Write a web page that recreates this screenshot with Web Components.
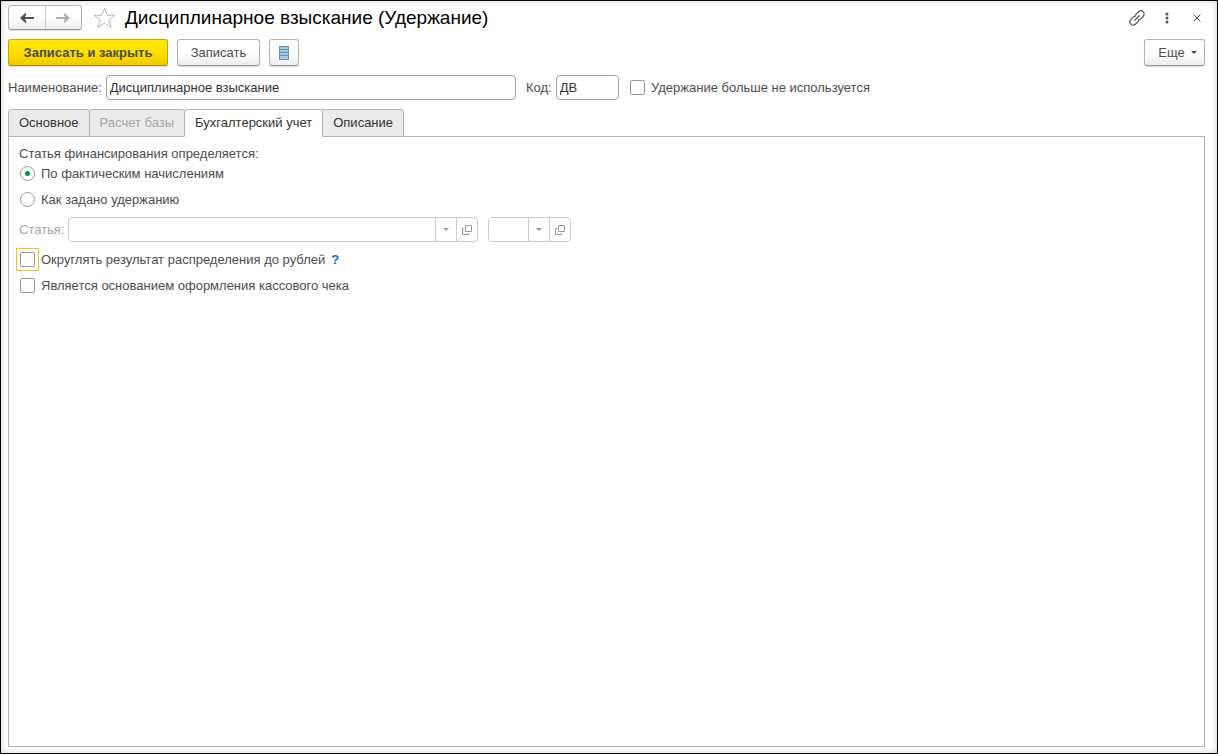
<!DOCTYPE html>
<html lang="ru">
<head>
<meta charset="utf-8">
<meta name="viewport" content="width=device-width, initial-scale=1">
<title>Дисциплинарное взыскание (Удержание)</title>
<style>
  body { margin: 0; font: 13px/16px "Liberation Sans", Arial, sans-serif; color: #4d4d4d; background: #fff; }
</style>
</head>
<body>
<deduction-form></deduction-form>
<script>
const base = `
  *, *::before, *::after { box-sizing: border-box; }
  button, input { font: inherit; color: inherit; margin: 0; }
  svg { display: block; }
`;

function define(name, css, html, setup) {
  const template = document.createElement('template');
  template.innerHTML = `<style>${base}${css}</style>${html}`;
  customElements.define(name, class extends HTMLElement {
    constructor() {
      super();
      this.attachShadow({ mode: 'open' }).append(template.content.cloneNode(true));
    }
    connectedCallback() {
      if (setup) setup(this, this.shadowRoot);
    }
  });
}

/* Push button; variant="primary" is the yellow default command */
define('ui-button', `
  :host { display: block; flex: none; }
  button { display: flex; align-items: center; justify-content: center; gap: 6px; width: 100%; height: 27px; padding: 0 12px;
    border: 1px solid #b3b3b3; border-bottom-color: #999; border-radius: 3px; white-space: nowrap;
    background: linear-gradient(#fff 50%, #ececec); box-shadow: 0 1px 1px #0002; }
  :host([variant=primary]) button { font-weight: bold; border-color: #c9a800; border-bottom-color: #a68a00;
    background: linear-gradient(#ffe70d, #ffdf00 50%, #ebca00); }
  :host([variant=icon]) button { width: 30px; padding: 0; }
  :host([variant=menu]) button { width: 61px; padding: 0 0 0 6px; }
`, `<button type="button"><slot></slot></button>`, (host, root) => {
  if (host.title) root.querySelector('button').setAttribute('aria-label', host.title);
});

/* Labelled text box */
define('ui-field', `
  :host { display: flex; align-items: center; gap: 4px; }
  label { white-space: nowrap; }
  input { flex: 1; min-width: 0; width: 100%; height: 25px; padding: 0 3px; border: 1px solid #a0a0a0; border-radius: 4px;
    background: #fff; color: #333; outline: none; }
`, `<label for="box"></label><input id="box" type="text">`, (host, root) => {
  root.querySelector('label').textContent = host.getAttribute('label');
  root.querySelector('input').value = host.getAttribute('value') || '';
});

/* Tick box or radio button with its caption */
define('ui-choice', `
  :host { display: flex; align-items: center; height: 15px; }
  label { display: flex; align-items: center; gap: 6px; white-space: nowrap; }
  input { appearance: none; position: relative; flex: none; width: 15px; height: 15px; border: 1px solid #999; border-radius: 2px; background: #fff; }
  input[type=radio] { border-radius: 50%; }
  input[type=radio]:checked { background: radial-gradient(circle, #009646 2px, #fff 3px); }
  input[type=checkbox]:checked { background: #009646; }
  :host([active]) input::before { content: ""; position: absolute; inset: -5px; border: 1px solid #f7c61b; }
`, `<label><input><slot></slot></label>`, (host, root) => {
  const input = root.querySelector('input');
  input.type = host.getAttribute('type') || 'checkbox';
  input.checked = host.hasAttribute('checked');
  input.addEventListener('change', () => host.dispatchEvent(new CustomEvent('pick', { bubbles: true })));
});

/* Disabled reference box with list and open buttons */
define('ui-picker', `
  :host { display: flex; align-items: center; gap: 3px; color: #a6a6a6; }
  .box { display: flex; flex: 1; min-width: 0; height: 25px; border: 1px solid #ccc; border-radius: 4px; background: #fff; overflow: hidden; }
  input { flex: 1; min-width: 0; width: 100%; border: 0; background: none; padding: 0 3px; }
  button { flex: none; display: grid; place-items: center; width: 21px; padding: 0; border: 0; border-left: 1px solid #ccc; background: none; }
  label:empty { display: none; }
`, `<label for="value"></label>
  <div class="box">
    <input id="value" type="text" disabled>
    <button type="button" disabled aria-label="Выбрать из списка"><svg width="6" height="3"><path d="M0 0H6L3 3Z" fill="#999"/></svg></button>
    <button type="button" disabled aria-label="Открыть"><svg width="10" height="10" fill="none" stroke="#999"><path d="M3.5.5H9.5V6.5H3.5ZM2 3.5H.5V9.5H6.5V8"/></svg></button>
  </div>`, (host, root) => {
  root.querySelector('label').textContent = host.getAttribute('label') || '';
  if (!host.hasAttribute('label')) root.querySelector('input').setAttribute('aria-label', 'Код статьи');
});

/* Window header: history buttons, favourite star, caption, window tools */
define('window-header', `
  :host { display: flex; align-items: center; height: 25px; }
  .history { display: flex; flex: none; width: 74px; height: 25px; border: 1px solid #b3b3b3; border-bottom-color: #999; border-radius: 3px;
    background: linear-gradient(#fff 50%, #ececec); box-shadow: 0 1px 1px #0002; }
  button { display: grid; place-items: center; padding: 0; border: 0; background: none; }
  .history button { flex: 1; }
  .history button + button { border-left: 1px solid #ccc; }
  .star { margin: 0 9px 0 11px; }
  h1 { flex: 1; min-width: 0; margin: 0; font-size: 19px; line-height: 24px; font-weight: normal; color: #000; white-space: nowrap; }
  .tools { display: flex; flex: none; gap: 10px; margin-right: -2px; }
  .tools button { width: 20px; height: 24px; }
`, `<div class="history">
    <button type="button" aria-label="Назад"><svg width="14" height="10"><path d="M0 5 5.500 0 6.500 1 5 4H14V6H5L6.500 9 5.500 10Z" fill="#4d4d4d"/></svg></button>
    <button type="button" aria-label="Вперед"><svg width="14" height="10"><path d="M14 5 8.500 0 7.500 1 9 4H0V6H9L7.500 9 8.500 10Z" fill="#b0b0b0"/></svg></button>
  </div>
  <button class="star" type="button" aria-label="Добавить в избранное"><svg width="23" height="22" viewBox="0 0 23 22" fill="none" stroke="#b4b9be"><path d="M11.500 1.200 14.200 8.300H22L15.800 12.900 18.200 20.600 11.500 16 4.800 20.600 7.200 12.900 1 8.300H8.800Z"/></svg></button>
  <h1><slot></slot></h1>
  <div class="tools">
    <button type="button" aria-label="Получить ссылку"><svg width="16" height="16" viewBox="0 0 16 16" fill="none" stroke="#555" stroke-width="1.200"><path d="M6.200 5.200 9.400 2C10.800.600 12.800.500 14.100 1.800S15.400 5.200 14 6.600L11.400 9.200C10.800 9.800 9.800 10 9 9.800M9.800 10.800 6.600 14C5.200 15.400 3.200 15.500 1.900 14.200S.600 10.800 2 9.400L4.600 6.800C5.200 6.200 6.200 6 7 6.200M5.500 10.500 10.500 5.500"/></svg></button>
    <button type="button" aria-label="Дополнительно"><svg width="4" height="12" fill="#555"><circle cx="2" cy="2" r="1.500"/><circle cx="2" cy="6" r="1.500"/><circle cx="2" cy="10" r="1.500"/></svg></button>
    <button type="button" aria-label="Закрыть"><svg width="8" height="8" stroke="#555"><path d="M.500.500 7.500 7.500M7.500.500.500 7.500"/></svg></button>
  </div>`);

/* Tab strip over a bordered page */
define('tab-pages', `
  :host { display: flex; flex-direction: column; }
  .strip { display: flex; margin-bottom: -1px; z-index: 1; }
  button { height: 28px; padding: 0 10px; border: 1px solid #b3b3b3; border-radius: 3px 3px 0 0; background: #ebebeb; color: #333; white-space: nowrap; }
  button + button { margin-left: -1px; }
  button:disabled { color: #a6a6a6; }
  button[aria-selected=true] { background: #fff; border-bottom-color: #fff; }
  .page { flex: 1; padding: 9px 10px; border: 1px solid #b3b3b3; }
`, `<div class="strip" role="tablist">
    <button type="button" role="tab" aria-selected="false">Основное</button>
    <button type="button" role="tab" aria-selected="false" disabled>Расчет базы</button>
    <button type="button" role="tab" aria-selected="true">Бухгалтерский учет</button>
    <button type="button" role="tab" aria-selected="false">Описание</button>
  </div>
  <div class="page" role="tabpanel"><slot></slot></div>`);

/* Contents of the accounting page */
define('accounting-page', `
  :host { display: flex; flex-direction: column; gap: 11px; }
  .options { display: flex; flex-direction: column; gap: 11px; }
  .heading { margin-bottom: -7px; }
  .article { display: flex; gap: 10px; margin: -1px 0; }
  .name { width: 459px; }
  .code { width: 83px; }
  ui-choice { padding-left: 1px; }
  .round { display: flex; align-items: center; gap: 6px; height: 15px; }
  a { color: #0072bc; text-decoration: none; font-weight: bold; }
`, `<div class="options" role="radiogroup" aria-labelledby="mode">
    <div class="heading" id="mode">Статья финансирования определяется:</div>
    <ui-choice type="radio" checked>По фактическим начислениям</ui-choice>
    <ui-choice type="radio">Как задано удержанию</ui-choice>
  </div>
  <div class="article">
    <ui-picker class="name" label="Статья:"></ui-picker>
    <ui-picker class="code"></ui-picker>
  </div>
  <div class="round"><ui-choice active>Округлять результат распределения до рублей</ui-choice><a href="#help" aria-label="Подсказка">?</a></div>
  <ui-choice>Является основанием оформления кассового чека</ui-choice>`, (host, root) => {
  const radios = [...root.querySelectorAll('ui-choice[type=radio]')];
  radios.forEach(radio => radio.addEventListener('pick', () => {
    radios.forEach(other => { other.shadowRoot.querySelector('input').checked = other === radio; });
  }));
});

define('deduction-form', `
  :host { display: flex; flex-direction: column; gap: 9px; min-height: 100vh; padding: 4px 12px 6px 7px; border: 1px solid #000;
    box-shadow: inset 0 0 6px #0003; box-sizing: border-box; }
  .commands { display: flex; gap: 9px; }
  .save-close { min-width: 160px; }
  .save { min-width: 83px; }
  .more { margin-left: auto; }
  .fields { display: flex; align-items: center; }
  .name { width: 508px; margin-right: 10px; }
  .code { width: 93px; margin-right: 11px; }
  tab-pages { flex: 1; }
`, `<window-header>Дисциплинарное взыскание (Удержание)</window-header>
  <div class="commands">
    <ui-button class="save-close" variant="primary">Записать и закрыть</ui-button>
    <ui-button class="save">Записать</ui-button>
    <ui-button variant="icon" title="Список"><svg width="10" height="14"><path fill="#a9c8dc" d="M0 0H10V14H0Z"/><path stroke="#6690ae" d="M0 .500H10M0 3.500H10M0 6.500H10M0 9.500H10M0 13.500H10M.500 0V14M9.500 0V14"/></svg></ui-button>
    <ui-button class="more" variant="menu">Еще <svg width="6" height="3"><path d="M0 0H6L3 3Z" fill="#4d4d4d"/></svg></ui-button>
  </div>
  <div class="fields">
    <ui-field class="name" label="Наименование:" value="Дисциплинарное взыскание"></ui-field>
    <ui-field class="code" label="Код:" value="ДВ"></ui-field>
    <ui-choice>Удержание больше не используется</ui-choice>
  </div>
  <tab-pages><accounting-page></accounting-page></tab-pages>`);
</script>
</body>
</html>
